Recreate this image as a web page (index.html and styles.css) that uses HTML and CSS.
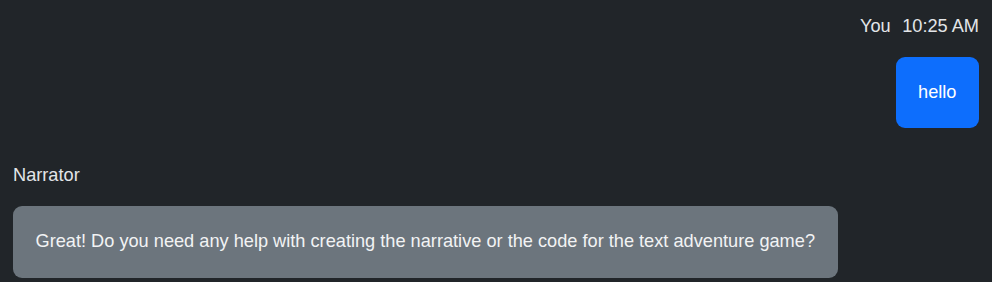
FILE: index.html
```html
<!DOCTYPE html>
<html lang="en">
<head>
<meta charset="utf-8">
<title>Chat</title>
<link rel="stylesheet" href="styles.css">
</head>
<body>
<div class="chat">
  <div class="message message-user">
    <div class="meta">
      <span class="author">You</span>
      <span class="time">10:25 AM</span>
    </div>
    <div class="bubble bubble-user">hello</div>
  </div>
  <div class="message message-narrator">
    <div class="meta">
      <span class="author">Narrator</span>
    </div>
    <div class="bubble bubble-narrator">Great! Do you need any help with creating the narrative or the code for the text adventure game?</div>
  </div>
</div>
</body>
</html>
```
FILE: styles.css
```css
html, body {
  margin: 0;
  padding: 0;
  background: #212529;
}
body {
  font-family: "Liberation Sans", Arial, sans-serif;
  font-size: 18.2px;
  line-height: 1.5;
  color: #dee2e6;
  width: 992px;
  height: 282px;
  overflow: hidden;
}
.chat {
  padding: 12.5px 13px 0 13px;
  display: flex;
  flex-direction: column;
  gap: 33.3px;
}
.message {
  display: flex;
  flex-direction: column;
  gap: 17.4px;
}
.message-user {
  align-items: flex-end;
}
.message-narrator {
  align-items: flex-start;
}
.meta {
  display: flex;
  gap: 9px;
  color: #e3e5e8;
}
.meta .time {
  margin-left: 2.5px;
}
.bubble {
  padding: 22px 22.5px;
  border-radius: 9px;
  color: #ffffff;
}
.bubble-user {
  background: #0d6efd;
}
.bubble-narrator {
  background: #6c757d;
  color: #f2f3f4;
}
```
